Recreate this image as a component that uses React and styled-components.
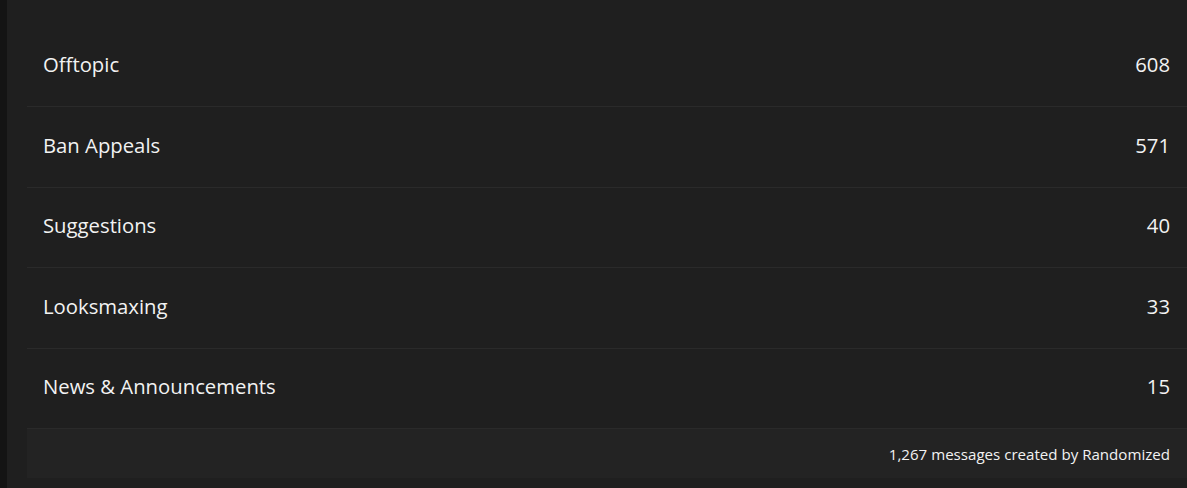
import React from "react";
import styled, { createGlobalStyle } from "styled-components";

const Global = createGlobalStyle`
  html, body { margin: 0; padding: 0; background: #141414; }
  body { font-family: "Open Sans", "Noto Sans", sans-serif; color: #f2f2f2; }
`;

const Page = styled.div`
  display: flex;
  height: 488px;
  overflow: hidden;
  background: #141414;
`;

const Panel = styled.section`
  flex: 1;
  margin-left: 7px;
  background: #1f1f1f;
  padding: 26.5px 0 10px 20px;
  display: flex;
  flex-direction: column;
`;

const List = styled.ul`
  list-style: none;
  margin: 0;
  padding: 0;
`;

const Row = styled.li`
  display: flex;
  align-items: center;
  justify-content: space-between;
  height: 80.5px;
  padding: 0 17px 4px 16px;
  border-bottom: 1px solid #2a2a2a;
  box-sizing: border-box;
  font-size: 20.3px;
`;

const Name = styled.span``;
const Count = styled.span``;

const Footer = styled.div`
  display: flex;
  justify-content: flex-end;
  align-items: center;
  height: 49px;
  padding: 1px 17px 0 16px;
  box-sizing: border-box;
  background: #232323;
  font-size: 15.1px;
`;

const rows = [
  ["Offtopic", 608],
  ["Ban Appeals", 571],
  ["Suggestions", 40],
  ["Looksmaxing", 33],
  ["News & Announcements", 15],
];

export default function App() {
  return (
    <>
      <Global />
      <Page>
        <Panel>
          <List>
            {rows.map(([n, c]) => (
              <Row key={n}>
                <Name>{n}</Name>
                <Count>{c}</Count>
              </Row>
            ))}
          </List>
          <Footer>1,267 messages created by Randomized</Footer>
        </Panel>
      </Page>
    </>
  );
}
